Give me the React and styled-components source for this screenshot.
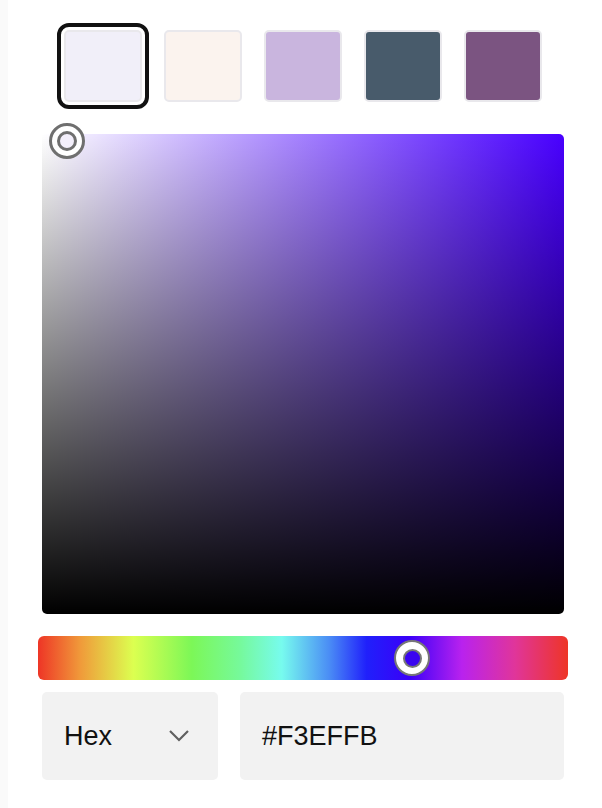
import React from "react";
import styled, { createGlobalStyle } from "styled-components";

const GlobalStyle = createGlobalStyle`
	html, body {
		margin: 0;
		padding: 0;
		background: #ffffff;
		font-family: "Liberation Sans", Arial, sans-serif;
	}
`;

const Page = styled.div`
	display: flex;
	flex-direction: column;
	width: 602px;
	height: 808px;
	box-sizing: border-box;
	border-left: 8px solid #fafafa;
	padding: 30px 38px 0 34px;
`;

const SwatchRow = styled.div`
	display: flex;
	justify-content: center;
	gap: 22px;
`;

const Swatch = styled.button`
	width: 78px;
	height: 72px;
	padding: 0;
	border: 2px solid #e9e8ec;
	border-radius: 5px;
	background: ${(p) => p.color};
	outline: ${(p) => (p.selected ? "4px solid #111111" : "none")};
	outline-offset: 3px;
	cursor: pointer;
`;

const Saturation = styled.div`
	position: relative;
	margin-top: 32px;
	height: 480px;
	border-radius: 5px;
	background: linear-gradient(to top, #000000, rgba(0, 0, 0, 0)),
		linear-gradient(to right, #ffffff, hsl(257, 100%, 50%));
`;

const SatThumb = styled.div`
	position: absolute;
	left: 7px;
	top: -11px;
	width: 36px;
	height: 36px;
	box-sizing: border-box;
	border: 3px solid #6f6f6f;
	border-radius: 50%;
	background: #ffffff;
	display: flex;
	align-items: center;
	justify-content: center;
`;

const SatDot = styled.div`
	width: 20px;
	height: 20px;
	box-sizing: border-box;
	border: 3px solid #6f6f6f;
	border-radius: 50%;
	background: ${(p) => p.color};
`;

const HueBar = styled.div`
	position: relative;
	margin: 22px -4px 0 -4px;
	height: 44px;
	border-radius: 6px;
	background: linear-gradient(
		to right,
		#ee3526 0%,
		#f09a3a 8%,
		#dcff50 18%,
		#7cf757 29%,
		#76f99a 38%,
		#77fbee 46%,
		#4a8cf5 55%,
		#2020fb 62%,
		#3a00f8 70%,
		#b922ee 80%,
		#e0359a 90%,
		#ee3526 100%
	);
`;

const HueThumb = styled.div`
	position: absolute;
	left: 356px;
	top: 4px;
	width: 36px;
	height: 36px;
	box-sizing: border-box;
	border: 2px solid #777777;
	border-radius: 50%;
	background: #ffffff;
	display: flex;
	align-items: center;
	justify-content: center;
`;

const HueDot = styled.div`
	width: 19px;
	height: 19px;
	box-sizing: border-box;
	border: 2px solid #777777;
	border-radius: 50%;
	background: #3a05f0;
`;

const Controls = styled.div`
	display: grid;
	grid-template-columns: 176px 1fr;
	gap: 22px;
	margin-top: 12px;
`;

const Field = styled.div`
	height: 88px;
	border-radius: 5px;
	background: #f2f2f2;
	display: flex;
	align-items: center;
	justify-content: space-between;
	box-sizing: border-box;
	padding: 0 28px 0 22px;
	font-size: 27px;
	color: #111111;
`;

const Chevron = () => (
	<svg width="22" height="14" viewBox="0 0 22 14" fill="none">
		<path d="M2 2 L11 11 L20 2" stroke="#606060" strokeWidth="2.2" />
	</svg>
);

const swatches = ["#f1eff9", "#fbf3ee", "#c9b5de", "#485b6b", "#7b5481"];

export default function App() {
	return (
		<>
			<GlobalStyle />
			<Page>
				<SwatchRow>
					{swatches.map((c, i) => (
						<Swatch key={c} color={c} selected={i === 0} />
					))}
				</SwatchRow>
				<Saturation>
					<SatThumb>
						<SatDot color="#f3effb" />
					</SatThumb>
				</Saturation>
				<HueBar>
					<HueThumb>
						<HueDot />
					</HueThumb>
				</HueBar>
				<Controls>
					<Field>
						Hex
						<Chevron />
					</Field>
					<Field>#F3EFFB</Field>
				</Controls>
			</Page>
		</>
	);
}
